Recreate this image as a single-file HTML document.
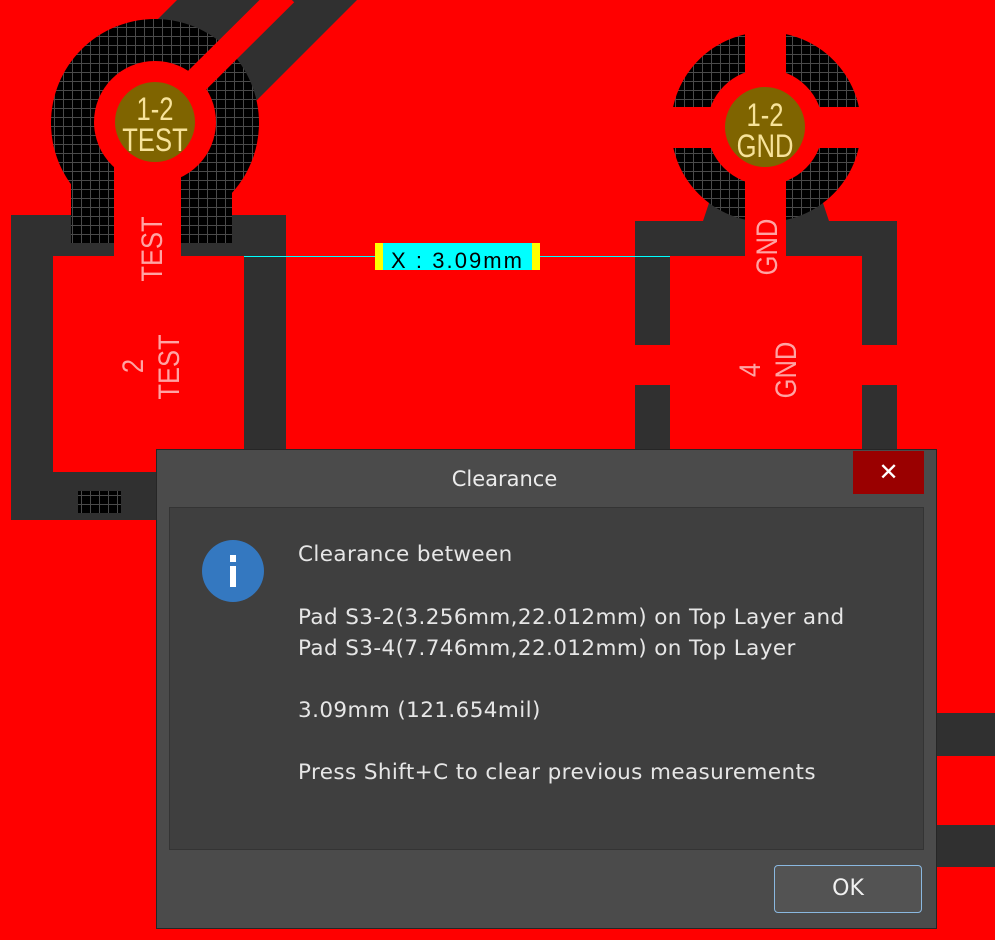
<!DOCTYPE html>
<html><head><meta charset="utf-8"><style>
html,body{margin:0;padding:0;width:995px;height:940px;overflow:hidden;background:#ff0000}
.abs{position:absolute}
.dlg{left:156px;top:449px;width:779px;height:478px;background:#4b4b4b;border:1px solid #262626;font-family:"DejaVu Sans",sans-serif}
.t{color:#e6e6e6;font-size:21.5px;position:absolute;white-space:nowrap;letter-spacing:0.4px}
</style></head><body>
<svg class="abs" style="left:0;top:0" width="995" height="940" viewBox="0 0 995 940">
<defs>
<pattern id="g" width="9" height="9" patternUnits="userSpaceOnUse"><rect width="9" height="9" fill="#000"/><path d="M0 0.5H9M0.5 0V9" stroke="#4a4a4a" stroke-width="1"/></pattern>
</defs>
<rect width="995" height="940" fill="#ff0000"/>
<!-- left pad -->
<polygon points="177,0 357,0 257,100 155,123 100,77" fill="#303030"/>
<rect x="11" y="215" width="275" height="305" fill="#303030"/>
<rect x="53" y="256" width="191" height="216" fill="#ff0000"/>
<rect x="78" y="491" width="43" height="22" fill="url(#g)"/>
<circle cx="155" cy="123" r="104" fill="url(#g)"/>
<rect x="71" y="150" width="161" height="93" fill="url(#g)"/>
<rect x="114" y="160" width="67" height="96" fill="#ff0000"/>
<line x1="285" y1="-7" x2="155" y2="122" stroke="#ff0000" stroke-width="26"/>
<circle cx="155" cy="122" r="61" fill="#ff0000"/>
<circle cx="155" cy="122" r="40" fill="#7f6400"/>
<!-- right pad -->
<rect x="635" y="221" width="262" height="124" fill="#303030"/>
<rect x="635" y="385" width="262" height="80" fill="#303030"/>
<rect x="670" y="256" width="192" height="220" fill="#ff0000"/>
<rect x="600" y="345" width="300" height="40" fill="#ff0000"/>
<polygon points="703,221 710,200 822,200 829,221" fill="#303030"/>
<circle cx="766" cy="127" r="95" fill="url(#g)"/>
<rect x="600" y="0" width="71" height="221" fill="#ff0000"/>
<rect x="861" y="0" width="60" height="221" fill="#ff0000"/>
<rect x="745" y="0" width="41" height="256" fill="#ff0000"/>
<rect x="600" y="107" width="330" height="41" fill="#ff0000"/>
<circle cx="765" cy="127" r="58" fill="#ff0000"/>
<circle cx="765" cy="127" r="40" fill="#7f6400"/>
<g fill="#f7e39a" font-family="Liberation Sans,sans-serif" font-size="32" text-anchor="middle">
<text transform="translate(155,120) scale(0.8,1)">1-2</text>
<text transform="translate(155,151) scale(0.8,1)">TEST</text>
<text transform="translate(765,126) scale(0.8,1)">1-2</text>
<text transform="translate(765,157) scale(0.8,1)">GND</text>
</g>
<g fill="#ffa3a3" font-family="Liberation Sans,sans-serif" font-size="30" text-anchor="middle">
<text transform="translate(162,249) rotate(-90) scale(0.85,1)">TEST</text>
<text transform="translate(143,366) rotate(-90) scale(0.85,1)">2</text>
<text transform="translate(179,367) rotate(-90) scale(0.85,1)">TEST</text>
<text transform="translate(777,247) rotate(-90) scale(0.85,1)">GND</text>
<text transform="translate(760,370) rotate(-90) scale(0.85,1)">4</text>
<text transform="translate(796,370) rotate(-90) scale(0.85,1)">GND</text>
</g>
<!-- measurement -->
<line x1="244" y1="256.5" x2="670" y2="256.5" stroke="#00ffff" stroke-width="1"/>
<rect x="375" y="243" width="165" height="27" fill="#00ffff"/>
<rect x="375" y="243" width="8" height="27" fill="#ffff00"/>
<rect x="532" y="243" width="8" height="27" fill="#ffff00"/>
<text x="391" y="268" fill="#000" font-family="Liberation Sans,sans-serif" font-size="22" textLength="131">X : 3.09mm</text>
<!-- right bottom -->
<rect x="937" y="713" width="58" height="43" fill="#303030"/>
<rect x="937" y="825" width="58" height="42" fill="#303030"/>
</svg>
<div class="abs dlg">
<div class="abs" style="left:0;top:17px;width:695px;text-align:center;color:#ececec;font-size:21px">Clearance</div>
<div class="abs" style="left:696px;top:1px;width:71px;height:43px;background:#9a0000;color:#fff;font-size:24px;text-align:center;line-height:43px;font-weight:bold">✕</div>
<div class="abs" style="left:12px;top:57px;width:753px;height:341px;background:#3f3f3f;border:1px solid #343434">
<div class="abs" style="left:32px;top:32px;width:62px;height:62px;border-radius:50%;background:#3478c0"></div>
<div class="abs" style="left:60px;top:47px;width:6px;height:7px;background:#fff"></div>
<div class="abs" style="left:60px;top:58px;width:6px;height:21px;background:#fff"></div>
<div class="t" style="left:128px;top:34px">Clearance between</div>
<div class="t" style="left:128px;top:97px">Pad S3-2(3.256mm,22.012mm) on Top Layer and</div>
<div class="t" style="left:128px;top:128px">Pad S3-4(7.746mm,22.012mm) on Top Layer</div>
<div class="t" style="left:128px;top:190px">3.09mm (121.654mil)</div>
<div class="t" style="left:128px;top:252px">Press Shift+C to clear previous measurements</div>
</div>
<div class="abs" style="left:617px;top:415px;width:146px;height:46px;background:#535353;border:1px solid #8ab8e0;border-radius:4px;color:#f0f0f0;font-size:22px;text-align:center;line-height:46px">OK</div>
</div>
</body></html>
